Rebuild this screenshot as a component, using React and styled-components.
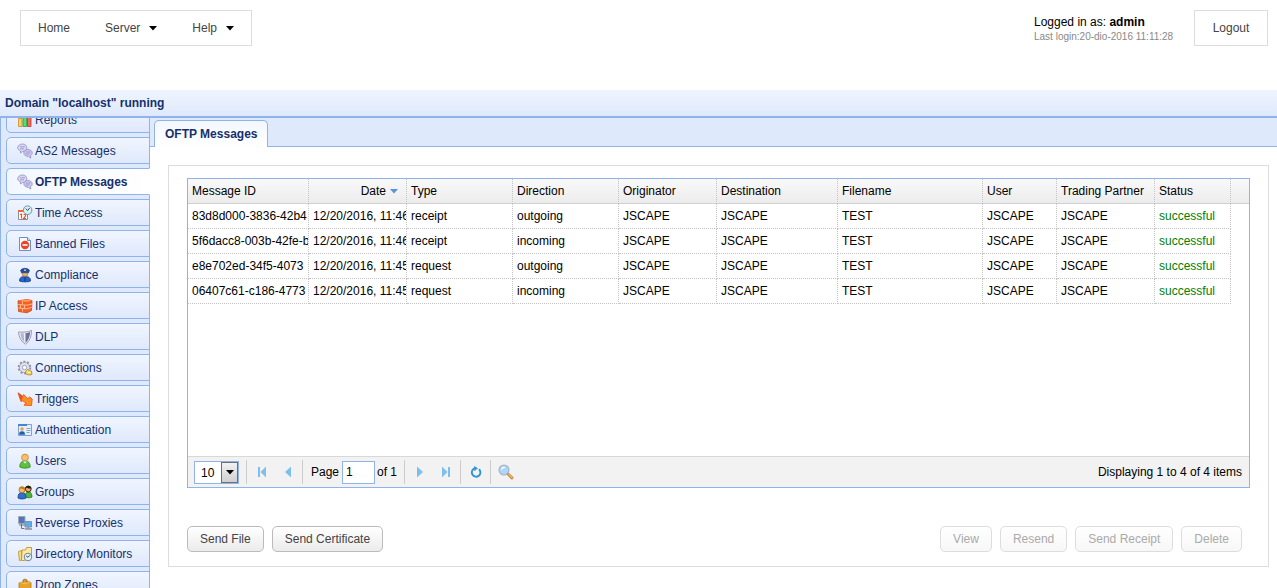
import React from 'react';
import styled, { createGlobalStyle, css } from 'styled-components';

const line = '#8fb3ea';
const navy = '#15306b';

const GlobalStyle = createGlobalStyle`
	* {
		box-sizing: border-box;
	}
	body {
		margin: 0;
		background: #fff;
		color: #000;
		font-family: "Liberation Sans", Arial, sans-serif;
		font-size: 12px;
		line-height: 16px;
	}
	button, input, select {
		font: inherit;
		margin: 0;
	}
	svg {
		display: block;
		flex: none;
	}
`;

const Page = styled.div`
	display: flex;
	flex-direction: column;
	height: 100vh;
	overflow: hidden;
`;

/* ---------- top bar ---------- */

const Header = styled.header`
	display: flex;
	justify-content: space-between;
	align-items: flex-start;
	height: 90px;
	flex: none;
	padding: 10px 9px 0 20px;
`;

const Menu = styled.nav`
	display: flex;
	gap: 1px;
	height: 36px;
	border: 1px solid #ddd;
`;

const MenuItem = styled.button`
	display: flex;
	align-items: center;
	gap: 9px;
	padding: 0 17px;
	border: 0;
	background: none;
	color: #444;
	cursor: pointer;
`;

const Account = styled.div`
	display: flex;
	gap: 12px;
`;

const AccountInfo = styled.div`
	min-width: 148px;
	padding-top: 4px;
	small {
		display: block;
		font-size: 10px;
		line-height: 14px;
		color: #888;
	}
`;

const Logout = styled.button`
	min-width: 74px;
	height: 36px;
	padding: 0 17px;
	border: 1px solid #ddd;
	background: #fff;
	color: #444;
	cursor: pointer;
`;

const DomainBar = styled.div`
	flex: none;
	height: 28px;
	padding: 5px;
	border-bottom: 2px solid ${line};
	background: linear-gradient(#eff5ff, #dfe9fc);
	color: ${navy};
	font-weight: bold;
`;

/* ---------- sidebar ---------- */

const Body = styled.div`
	display: flex;
	flex: 1;
	min-height: 0;
`;

const Sidebar = styled.nav`
	flex: none;
	width: 150px;
	overflow: hidden;
	border-left: 1px solid ${line};
	background: linear-gradient(${line}, ${line}) right / 1px 100% no-repeat #dfe9fc;
`;

/* the list is scrolled a little, so the first entry is cut */
const SideList = styled.ul`
	display: flex;
	flex-direction: column;
	gap: 4px;
	margin: -12px 0 0;
	padding: 0 0 0 5px;
	list-style: none;
`;

const SideLink = styled.a`
	display: flex;
	align-items: center;
	gap: 2px;
	height: 27px;
	padding-left: 10px;
	border: 1px solid ${line};
	border-radius: 5px 0 0 5px;
	background: linear-gradient(#f0f5ff, #dfe9fc);
	color: ${navy};
	text-decoration: none;
	white-space: nowrap;
	${(props) =>
		props.$active &&
		css`
			border-right-color: #fff;
			background: linear-gradient(to right, #f2f7ff, #fff);
			font-weight: bold;
		`}
`;

/* ---------- content ---------- */

const Content = styled.main`
	display: flex;
	flex-direction: column;
	flex: 1;
	min-width: 0;
`;

const TabStrip = styled.div`
	display: flex;
	flex: none;
	height: 29px;
	padding: 2px 4px 0;
	border-bottom: 1px solid ${line};
	background: #dfe9fc;
`;

const Tab = styled.button`
	height: 27px;
	padding: 0 10px;
	border: 1px solid ${line};
	border-bottom: 0;
	border-radius: 5px 5px 0 0;
	background: linear-gradient(#f2f7ff, #fff);
	color: ${navy};
	font-weight: bold;
`;

const Panel = styled.section`
	display: flex;
	flex-direction: column;
	flex: 1;
	margin: 18px 8px 21px 18px;
	padding: 12px 18px 14px;
	border: 1px solid #ddd;
`;

const Grid = styled.div`
	display: flex;
	flex-direction: column;
	flex: 1;
	border: 1px solid ${line};
`;

const GridBody = styled.div`
	flex: 1;
	overflow: hidden;
`;

const Table = styled.table`
	width: 100%;
	table-layout: fixed;
	border-collapse: separate;
	border-spacing: 0;
	th,
	td {
		height: 25px;
		padding: 0 0 0 4px;
		overflow: hidden;
		white-space: nowrap;
		text-align: left;
		font-weight: normal;
		border-right: 1px dotted #c4c4c4;
	}
	th {
		border-bottom: 1px solid #d0d0d0;
		background: linear-gradient(#f9f9f9, #ececec);
	}
	td {
		border-bottom: 1px dotted #c4c4c4;
	}
	th:last-child,
	td:last-child {
		border-right: 0;
	}
	td:last-child {
		border-bottom: 0;
	}
`;

const SortButton = styled.button`
	display: flex;
	align-items: center;
	justify-content: flex-end;
	gap: 4px;
	width: 100%;
	padding: 0 8px 0 0;
	border: 0;
	background: none;
	color: inherit;
`;

const Status = styled.span`
	color: #008000;
`;

const Pager = styled.div`
	display: flex;
	align-items: center;
	height: 31px;
	padding: 0 7px 0 6px;
	border-top: 1px solid #d8d8d8;
	background: #f2f2f2;
`;

const PageSize = styled.div`
	position: relative;
	width: 45px;
	margin-right: 6px;
	select {
		display: block;
		appearance: none;
		width: 100%;
		height: 23px;
		padding: 2px 0 0 6px;
		border: 1px solid ${line};
		border-radius: 0;
		background: #fff;
		color: #000;
	}
	span {
		position: absolute;
		top: 1px;
		right: 1px;
		bottom: 1px;
		display: flex;
		align-items: center;
		justify-content: center;
		width: 17px;
		border: 1px solid #707070;
		background: linear-gradient(#f2f2f2, #cfcfcf);
		pointer-events: none;
	}
`;

const Separator = styled.i`
	width: 1px;
	height: 24px;
	margin: 0 2px 0 1px;
	background: #ccc;
`;

const IconButton = styled.button`
	display: flex;
	align-items: center;
	justify-content: center;
	width: 26px;
	height: 24px;
	padding: 0;
	border: 0;
	background: none;
`;

const PageLabel = styled.label`
	display: flex;
	align-items: center;
	gap: 3px;
	margin-left: 6px;
	input {
		width: 33px;
		height: 23px;
		padding: 0 3px;
		border: 1px solid ${line};
		background: #fff;
	}
`;

const PageTotal = styled.span`
	margin: 0 6px 0 2px;
`;

const Summary = styled.span`
	margin-left: auto;
`;

const Actions = styled.div`
	display: flex;
	gap: 8px;
	margin-top: 38px;
	padding-right: 8px;
`;

const Spacer = styled.div`
	flex: 1;
`;

const Button = styled.button`
	height: 26px;
	padding: 0 12px;
	border: 1px solid #bbb;
	border-radius: 5px;
	background: linear-gradient(#fff, #ebebeb);
	color: #444;
	&:disabled {
		border-color: #ddd;
		background: linear-gradient(#fff, #f7f7f7);
		color: #aaa;
	}
`;

/* ---------- icons ---------- */

const Caret = ({ color = '#000' }) => (
	<svg width="8" height="5" viewBox="0 0 8 5">
		<path d="M0 0h8L4 4.6z" fill={color} />
	</svg>
);

const icons = {
	reports: (
		<g strokeWidth="0.8">
			<path d="M1.5 6.500h3.500v8h-3.500z" fill="#ffd45e" stroke="#c98b1d" />
			<path d="M6 3.500h3.500v11h-3.500z" fill="#5fdc6c" stroke="#2b9a3d" />
			<path d="M10.500 5.500h3.500v9h-3.500z" fill="#f26a5c" stroke="#b8322b" />
		</g>
	),
	chat: (
		<g stroke="#8f8ac2" strokeWidth="0.8">
			<path d="M5.500 1C8 1 9.800 2.600 9.800 4.800S8 8.400 5.600 8.400L3.500 10l.1-2.100C2 7.300.7 6.200.7 4.800.700 2.600 3 1 5.500 1z" fill="#dcd9f4" />
			<path d="M3 3.800h5M3 5.800h4" />
			<path d="M10.800 6.500c2.500 0 4.400 1.400 4.400 3.400 0 1.200-.7 2.200-1.700 2.800l.2 2.400-2.400-1.800c-2.500 0-4.500-1.400-4.500-3.400s1.700-3.400 4-3.400z" fill="#cfcbee" />
			<path d="M8.700 9h4.800M8.700 11h4" />
		</g>
	),
	time: (
		<g>
			<path d="M1.500 6.500h9v8h-9z" fill="#fff" stroke="#8c8c94" />
			<path d="M1 5h6v2H1z" fill="#f0642d" />
			<path d="M3 9.500l1.500-.5v4.500M6.500 9.500h2v1.500l-2 2.500h2.500" fill="none" stroke="#e8541c" strokeWidth="1.2" />
			<circle cx="10.600" cy="5.200" r="4.300" fill="#d9f0f7" stroke="#7092a6" />
			<path d="M8.600 3.500l2 2 2-2.500" fill="none" stroke="#2f5063" />
		</g>
	),
	banned: (
		<g>
			<path d="M2.500 1.500h8l3 3v10h-11z" fill="#f7faff" stroke="#6f8fc0" />
			<path d="M10.500 1.500v3h3" fill="#cbd9f0" stroke="#6f8fc0" />
			<circle cx="8" cy="9" r="4.200" fill="#ee4423" />
			<path d="M5.500 8.200h5v1.600h-5z" fill="#fff" />
		</g>
	),
	officer: (
		<g>
			<path d="M2.500 14c0-3.500 2-4.500 5.500-4.500s5.500 1 5.500 4.500c-2 1.200-9 1.200-11 0z" fill="#2465cf" stroke="#143a86" strokeWidth="0.8" />
			<circle cx="8" cy="6.500" r="2.900" fill="#f2b36b" stroke="#a86a2b" strokeWidth="0.6" />
			<path d="M3.500 3.500C5 .6 11 .6 12.500 3.500L11.500 5.800h-7z" fill="#1f4fae" stroke="#102f70" strokeWidth="0.6" />
			<circle cx="8" cy="3.200" r="0.900" fill="#ffd95a" />
			<path d="M8 10v4" stroke="#123473" />
		</g>
	),
	firewall: (
		<g>
			<path d="M1 2.800l9-1.300 5 1-.5 10-4.500 2.300-8.500-1.300z" fill="#f2602a" stroke="#d0441a" strokeWidth="0.8" />
			<path d="M1 2.800l9-1.300 5 1-5 1.600z" fill="#ff9a5c" />
			<path d="M1.200 6.500l8.600.7L15 6M1.300 10l8.600.8 4.800-1.500M5.500 3.500v3.200M3.500 7v3M7.500 7.200v3.300M5.500 10.500v3" fill="none" stroke="#ffc596" strokeWidth="0.900" />
		</g>
	),
	shield: (
		<g>
			<path d="M1.500 3c4.500.5 9 .2 13-1.500-.2 6.500-2 10.800-6 13.700C4.200 12.500 2 8.700 1.500 3z" fill="#eef0f6" stroke="#8e91ac" strokeWidth="0.9" />
			<path d="M3.500 4.200l3.200.1.500 8.700C4.800 11 3.800 8 3.500 4.200z" fill="#b3b6cf" />
			<path d="M8.500 4.200c1.900-.2 3.300-.6 4.700-1.200-.3 4.700-1.700 8.300-4.700 10.900z" fill="#6f7299" />
		</g>
	),
	gear: (
		<g>
			<circle cx="7.500" cy="7.500" r="5.800" fill="none" stroke="#8d92a8" strokeWidth="2" strokeDasharray="2 1.640" />
			<circle cx="7.500" cy="7.500" r="5" fill="#e2e4ee" stroke="#989cb0" strokeWidth="0.800" />
			<circle cx="7.500" cy="7.500" r="2.200" fill="#fff" stroke="#888da3" strokeWidth="0.800" />
			<path d="M8.500 11.500l2-2 2 1 2 .5.500 3.500-3 .5-3.500-1z" fill="#f5d652" stroke="#9b7c1f" strokeWidth="0.700" />
			<path d="M10.500 11.500l1.500 1.500 1-1.500" fill="none" stroke="#fff" />
		</g>
	),
	trigger: (
		<g strokeLinejoin="round">
			<path d="M1 1.800l5 3.700.7-2 4 4.200 1.800-1.700L15.200 8l-.7 6.500-7.500-.3 2-2.200-3.300-2.200L4 10.500z" fill="#ff8f22" stroke="#e8581a" strokeWidth="0.900" />
			<path d="M1 1.800l5 3.700L4 10.500z" fill="#e95222" />
		</g>
	),
	idcard: (
		<g>
			<path d="M1.500 2.500h13v11h-13z" fill="#e5f0fc" stroke="#7ba2d2" />
			<path d="M1 2h9v2H1z" fill="#4a83cf" />
			<circle cx="5" cy="7" r="1.800" fill="#e9a24f" />
			<path d="M2 12.800c0-2.500 1-3.500 3-3.500s3 1 3 3.500z" fill="#275bab" />
			<path d="M9.500 6.500h4M9.500 8.500h4M9.500 10.500h3" stroke="#7fa5d4" />
		</g>
	),
	user: (
		<g>
			<path d="M2.800 14c0-4 1.700-6 5.200-6s5.200 2 5.200 6c-2 1.500-8.400 1.500-10.400 0z" fill="#5cc23e" stroke="#2f8424" strokeWidth="0.800" />
			<circle cx="8" cy="4.500" r="3.400" fill="#f7c06c" stroke="#c08432" strokeWidth="0.800" />
			<path d="M6 8.500l2 2 2-2" fill="#fff" />
		</g>
	),
	group: (
		<g>
			<path d="M8 13c0-3 1-5 3.500-5s3.500 2 3.500 5c-1 1-6 1-7 0z" fill="#4fb43a" stroke="#25751d" strokeWidth="0.800" />
			<circle cx="11.300" cy="5" r="2.900" fill="#e9ad65" stroke="#241a12" strokeWidth="0.900" />
			<path d="M8.300 4.500c0-3.800 6-3.800 6 0-2 .3-4 0-4.500-1z" fill="#221a15" />
			<path d="M1 14c0-3.500 1-5.500 4-5.500s4 2 4 5.500c-1.500 1.300-6.500 1.300-8 0z" fill="#2f6fd0" stroke="#163f8c" strokeWidth="0.800" />
			<circle cx="5" cy="5.800" r="3" fill="#f5bd6a" stroke="#a8631f" strokeWidth="0.800" />
			<path d="M1.900 5.500c0-4 6.200-4 6.200 0-2 0-3.500-.3-4-1.300z" fill="#c87f1f" />
		</g>
	),
	proxy: (
		<g>
			<path d="M1.500 1.500h6.500v7H1.500z" fill="#4f78c0" stroke="#a2a7b5" />
			<path d="M2 10h6M4.500 8.500v5h3" fill="none" stroke="#6d7280" />
			<path d="M8 6.500h6.500v5.500H8z" fill="#59aef0" stroke="#8c8f99" />
			<path d="M8 14h7M11.200 12v2" stroke="#8c8f99" strokeWidth="1.400" />
		</g>
	),
	folders: (
		<g>
			<path d="M1.500 5.500l3-1v9.500l-2 .5z" fill="#f9e08a" stroke="#c39425" strokeWidth="0.900" />
			<path d="M5 4h3.500l1-2.500h5v9l-7 4H4.500z" fill="#fbe9a6" stroke="#c39425" strokeWidth="0.900" />
			<circle cx="11" cy="11" r="3.800" fill="#e6f1f7" stroke="#71859a" />
			<path d="M9.200 10l1.800 1.300 1.800-2" fill="none" stroke="#33485b" />
		</g>
	),
	box: (
		<g>
			<path d="M2 6l8-2 4 1.500v8L8 15l-6-1.500z" fill="#e5a32c" stroke="#b07a1a" strokeWidth="0.800" />
			<path d="M2 6l6 1.200 6-1.700-4-1.500z" fill="#f0be55" />
			<path d="M6 5.500V3c1.500-1 3-1 4 0v2.500" fill="#d9992a" stroke="#9a6712" strokeWidth="0.800" />
		</g>
	),
};

const Icon = ({ name }) => (
	<svg width="16" height="16" viewBox="0 0 16 16" aria-hidden="true">
		{icons[name]}
	</svg>
);

const PagerArrow = ({ flip, bar }) => (
	<svg width="10" height="12" viewBox="0 0 10 12">
		<g fill="#7cc0ee" transform={flip ? 'matrix(-1 0 0 1 10 0)' : undefined}>
			<path d={bar ? 'M9 0.500v11L3.500 6z' : 'M8 0.500v11L2 6z'} />
			{bar && <path d="M1 1h2v10H1z" />}
		</g>
	</svg>
);

const RefreshIcon = () => (
	<svg width="12" height="12" viewBox="0 0 12 12">
		<path d="M9 3.200A4.300 4.300 0 1 1 4.500 2.400" fill="none" stroke="#2f93d6" strokeWidth="1.900" />
		<path d="M4 0l4 2.300L4.300 5.200z" fill="#2f93d6" />
	</svg>
);

const SearchIcon = () => (
	<svg width="16" height="16" viewBox="0 0 16 16">
		<path d="M10 10l4 3.800" stroke="#b98a58" strokeWidth="3" strokeLinecap="round" />
		<path d="M11 10.500l3 2.900" stroke="#f9b04a" strokeWidth="1.700" strokeLinecap="round" />
		<circle cx="6" cy="6" r="4.900" fill="#a9d8fa" stroke="#aab4c8" strokeWidth="1.300" />
		<path d="M3.500 5.500c.5-1.700 2-2.500 3.500-2" fill="none" stroke="#fff" strokeWidth="1.300" />
	</svg>
);

/* ---------- data ---------- */

const sideItems = [
	['Reports', 'reports'],
	['AS2 Messages', 'chat'],
	['OFTP Messages', 'chat'],
	['Time Access', 'time'],
	['Banned Files', 'banned'],
	['Compliance', 'officer'],
	['IP Access', 'firewall'],
	['DLP', 'shield'],
	['Connections', 'gear'],
	['Triggers', 'trigger'],
	['Authentication', 'idcard'],
	['Users', 'user'],
	['Groups', 'group'],
	['Reverse Proxies', 'proxy'],
	['Directory Monitors', 'folders'],
	['Drop Zones', 'box'],
];

const columns = [
	['Message ID', 121],
	['Date', 98],
	['Type', 106],
	['Direction', 106],
	['Originator', 98],
	['Destination', 121],
	['Filename', 145],
	['User', 74],
	['Trading Partner', 98],
	['Status', 76],
];

const messages = [
	{ id: '83d8d000-3836-42b4', date: '12/20/2016, 11:46', type: 'receipt', direction: 'outgoing' },
	{ id: '5f6dacc8-003b-42fe-b', date: '12/20/2016, 11:46', type: 'receipt', direction: 'incoming' },
	{ id: 'e8e702ed-34f5-4073', date: '12/20/2016, 11:45', type: 'request', direction: 'outgoing' },
	{ id: '06407c61-c186-4773', date: '12/20/2016, 11:45', type: 'request', direction: 'incoming' },
];

const MessageTable = () => (
	<Table>
		<colgroup>
			{columns.map(([name, width]) => (
				<col key={name} width={width} />
			))}
			<col />
		</colgroup>
		<thead>
			<tr>
				{columns.map(([name]) => (
					<th key={name} scope="col">
						{name === 'Date' ? (
							<SortButton>
								Date <Caret color="#5b94d6" />
							</SortButton>
						) : (
							name
						)}
					</th>
				))}
				<th />
			</tr>
		</thead>
		<tbody>
			{messages.map((m) => (
				<tr key={m.id}>
					<td>{m.id}</td>
					<td>{m.date}</td>
					<td>{m.type}</td>
					<td>{m.direction}</td>
					<td>JSCAPE</td>
					<td>JSCAPE</td>
					<td>TEST</td>
					<td>JSCAPE</td>
					<td>JSCAPE</td>
					<td>
						<Status>successful</Status>
					</td>
					<td />
				</tr>
			))}
		</tbody>
	</Table>
);

const GridPager = () => (
	<Pager>
		<PageSize>
			<select aria-label="Items per page" defaultValue="10">
				<option>10</option>
				<option>25</option>
				<option>50</option>
			</select>
			<span>
				<Caret />
			</span>
		</PageSize>
		<Separator />
		<IconButton aria-label="First page">
			<PagerArrow bar />
		</IconButton>
		<IconButton aria-label="Previous page">
			<PagerArrow />
		</IconButton>
		<Separator />
		<PageLabel>
			Page
			<input type="text" defaultValue="1" />
		</PageLabel>
		<PageTotal>of 1</PageTotal>
		<Separator />
		<IconButton aria-label="Next page">
			<PagerArrow flip />
		</IconButton>
		<IconButton aria-label="Last page">
			<PagerArrow flip bar />
		</IconButton>
		<Separator />
		<IconButton aria-label="Refresh">
			<RefreshIcon />
		</IconButton>
		<Separator />
		<IconButton aria-label="Search">
			<SearchIcon />
		</IconButton>
		<Summary>Displaying 1 to 4 of 4 items</Summary>
	</Pager>
);

const App = () => {
	return (
		<Page>
			<GlobalStyle />
			<Header>
				<Menu>
					<MenuItem>Home</MenuItem>
					<MenuItem>
						Server <Caret />
					</MenuItem>
					<MenuItem>
						Help <Caret />
					</MenuItem>
				</Menu>
				<Account>
					<AccountInfo>
						Logged in as: <b>admin</b>
						<small>Last login:20-dio-2016 11:11:28</small>
					</AccountInfo>
					<Logout>Logout</Logout>
				</Account>
			</Header>
			<DomainBar>Domain "localhost" running</DomainBar>
			<Body>
				<Sidebar>
					<SideList>
						{sideItems.map(([label, icon]) => (
							<li key={label}>
								<SideLink href="#" $active={label === 'OFTP Messages'}>
									<Icon name={icon} />
									{label}
								</SideLink>
							</li>
						))}
					</SideList>
				</Sidebar>
				<Content>
					<TabStrip>
						<Tab>OFTP Messages</Tab>
					</TabStrip>
					<Panel>
						<Grid>
							<GridBody>
								<MessageTable />
							</GridBody>
							<GridPager />
						</Grid>
						<Actions>
							<Button>Send File</Button>
							<Button>Send Certificate</Button>
							<Spacer />
							<Button disabled>View</Button>
							<Button disabled>Resend</Button>
							<Button disabled>Send Receipt</Button>
							<Button disabled>Delete</Button>
						</Actions>
					</Panel>
				</Content>
			</Body>
		</Page>
	);
};

export default App;
